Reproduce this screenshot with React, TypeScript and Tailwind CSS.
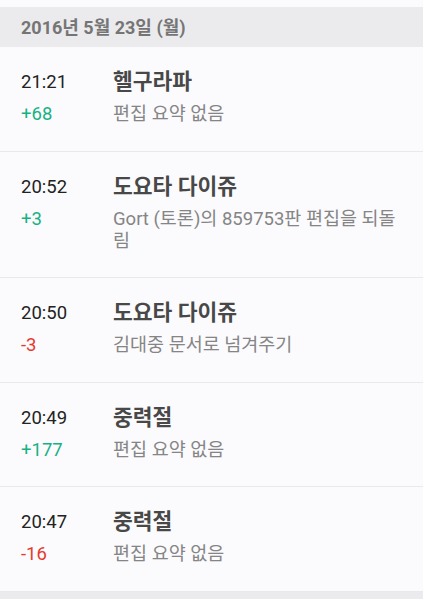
import React from 'react';

type Change = {
    time: string;
    diff: number;
    title: string;
    summary: string;
};

const changes: Change[] = [
    { time: '21:21', diff: 68, title: '헬구라파', summary: '편집 요약 없음' },
    { time: '20:52', diff: 3, title: '도요타 다이쥬', summary: 'Gort (토론)의 859753판 편집을 되돌림' },
    { time: '20:50', diff: -3, title: '도요타 다이쥬', summary: '김대중 문서로 넘겨주기' },
    { time: '20:49', diff: 177, title: '중력절', summary: '편집 요약 없음' },
    { time: '20:47', diff: -16, title: '중력절', summary: '편집 요약 없음' },
];

// 변경 내역 한 줄
function ChangeRow({ item }: { item: Change }) {
    const plus = item.diff > 0;
    return (
        <div className="flex border-b border-[#e9e9eb] bg-[#fbfbfd] pl-[21px] pr-5 pt-[22px] pb-[25.5px]">
            <div className="w-[92px] shrink-0">
                <div className="text-[18.5px] leading-[26px] text-[#222]">{item.time}</div>
                <div className={`mt-[8px] text-[18.5px] leading-[22px] ${plus ? 'text-[#17b184]' : 'text-[#e53a2f]'}`}>
                    {plus ? '+' + item.diff : item.diff}
                </div>
            </div>
            <div className="min-w-0 flex-1">
                <div className="text-[21.5px] font-bold leading-[26px] text-[#484848]">{item.title}</div>
                <div className="mt-[8px] text-[18.5px] leading-[22px] text-[#858585]">{item.summary}</div>
            </div>
        </div>
    );
}

export default function App() {
    return (
        <div
            className="min-h-[599px] w-[423px] bg-[#ebebed] pt-[7px]"
            style={{ fontFamily: "Roboto, 'Noto Sans CJK KR', sans-serif" }}
        >
            <div className="-mt-[7px] h-[7px] bg-[#fbfbfd]" />
            <div className="flex h-[40px] items-center bg-[#ebebed] pl-[21px] text-[18px] font-bold text-[#757575]">
                2016년 5월 23일 (월)
            </div>
            {changes.map((c, i) => (
                <ChangeRow key={i} item={c} />
            ))}
        </div>
    );
}
